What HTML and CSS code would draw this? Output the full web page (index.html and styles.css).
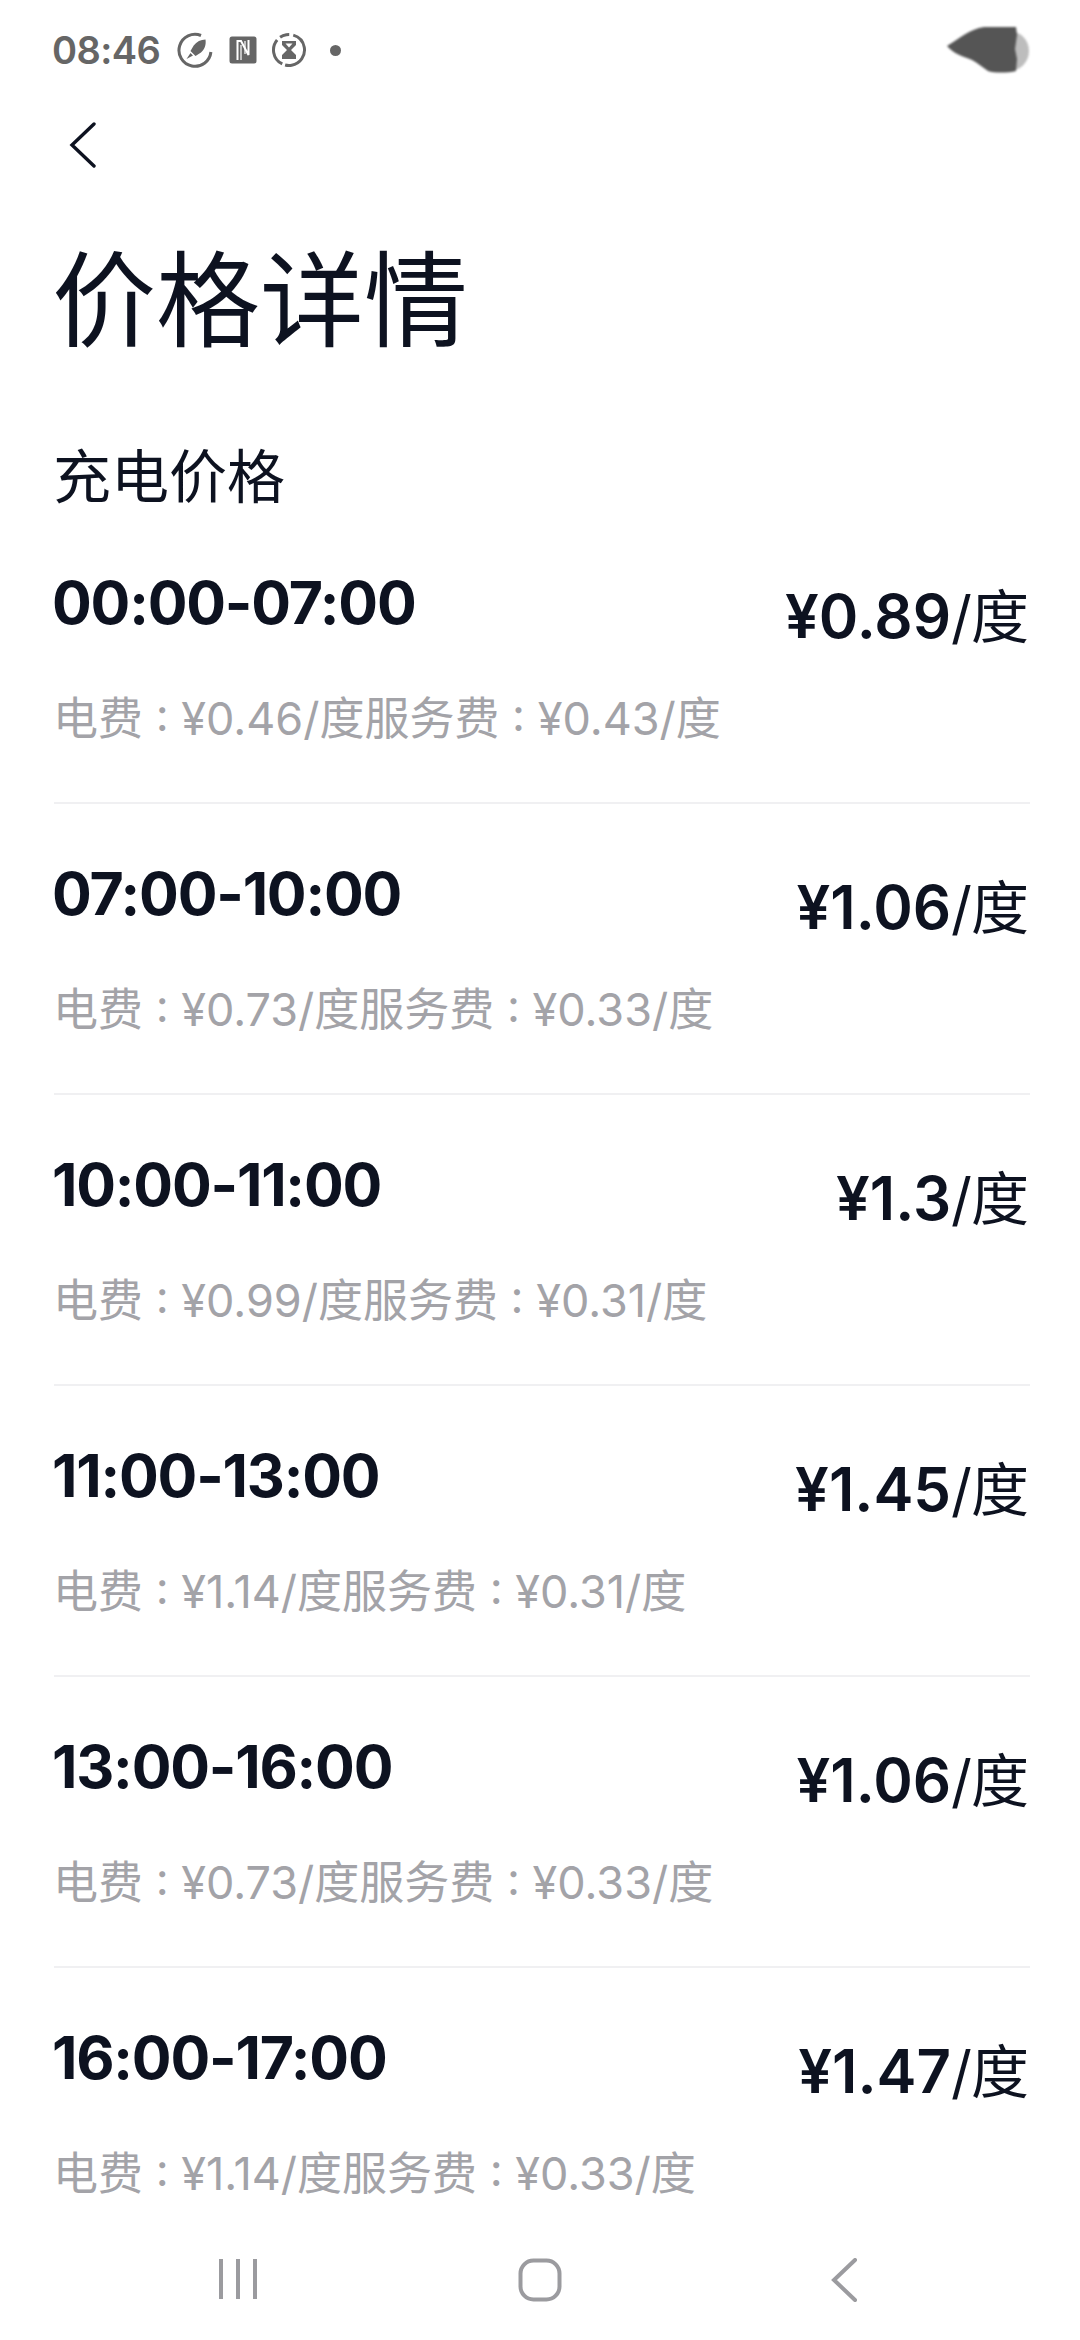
FILE: index.html
```html
<!DOCTYPE html>
<html lang="zh">
<head>
<meta charset="utf-8">
<title>价格详情</title>
<link rel="stylesheet" href="styles.css">
</head>
<body>
<div class="page">
  <div class="status">
    <div class="status-left">
      <span class="clock">08:46</span>
      <svg class="si" width="36" height="36" viewBox="0 0 36 36"><path d="M24 3.5A16 16 0 1 0 33.9 20" fill="none" stroke="#666" stroke-width="3"/><path d="M28.5 7.5c.8 5.5-1 10-4.500 13l-5.500 3.500-5-5 3.200-5.500c3-3.800 7-6 11.800-6zM13.500 21l2.500 2.500-6.500 3.500z" fill="#666"/></svg>
      <svg class="si" width="28" height="28" viewBox="0 0 28 28"><rect x="0.5" y="0.5" width="27" height="27" rx="2.5" fill="#666"/><path d="M8.500 24V5h3.500l7.500 14V4" fill="none" stroke="#fff" stroke-width="2"/><path d="M12 9v15M16 5v13" fill="none" stroke="#fff" stroke-width="1.200"/></svg>
      <svg class="si si-glass" width="36" height="36" viewBox="0 0 36 36"><circle cx="18" cy="18" r="15.500" fill="none" stroke="#666" stroke-width="3" stroke-dasharray="3 4 48 3 28 4 11 0" transform="rotate(-100 18 18)"/><path d="M11 9h14v4l-5 5 5 5v4H11v-4l5-5-5-5z" fill="#666"/><path d="M14.500 11.500h7l-3.500 4z" fill="#fff"/></svg>
      <span class="dot"></span>
    </div>
    <svg class="blob" width="84" height="48" viewBox="0 0 84 48"><circle cx="63" cy="25" r="20" fill="#bdbdbd"/><path d="M1 20C14 12 24 3 38 1h32l1 8-2 14 2 10-1 12c-8 2-22 2-28 0-6-4-10-8-16-11C16 30 8 28 1 20z" fill="#555"/></svg>
  </div>
  <div class="nav-top">
    <svg width="27" height="46" viewBox="0 0 27 46"><path d="M25 2 3 23l22 21" fill="none" stroke="#0d1220" stroke-width="3.400" stroke-linecap="round"/></svg>
  </div>
  <h1 class="title">价格详情</h1>
  <h2 class="section">充电价格</h2>
  <div class="list">
    <div class="row">
      <div class="info"><div class="time">00:00-07:00</div><div class="sub">电费 : ¥0.46/度服务费 : ¥0.43/度</div></div>
      <div class="price"><b>¥0.89</b>/度</div>
    </div>
    <div class="row">
      <div class="info"><div class="time">07:00-10:00</div><div class="sub">电费 : ¥0.73/度服务费 : ¥0.33/度</div></div>
      <div class="price"><b>¥1.06</b>/度</div>
    </div>
    <div class="row">
      <div class="info"><div class="time">10:00-11:00</div><div class="sub">电费 : ¥0.99/度服务费 : ¥0.31/度</div></div>
      <div class="price"><b>¥1.3</b>/度</div>
    </div>
    <div class="row">
      <div class="info"><div class="time">11:00-13:00</div><div class="sub">电费 : ¥1.14/度服务费 : ¥0.31/度</div></div>
      <div class="price"><b>¥1.45</b>/度</div>
    </div>
    <div class="row">
      <div class="info"><div class="time">13:00-16:00</div><div class="sub">电费 : ¥0.73/度服务费 : ¥0.33/度</div></div>
      <div class="price"><b>¥1.06</b>/度</div>
    </div>
    <div class="row">
      <div class="info"><div class="time">16:00-17:00</div><div class="sub">电费 : ¥1.14/度服务费 : ¥0.33/度</div></div>
      <div class="price"><b>¥1.47</b>/度</div>
    </div>
  </div>
  <div class="navbar">
    <svg width="40" height="42" viewBox="0 0 40 42"><path d="M3 1v40M20 1v40M37 1v40" stroke="#9b9b9f" stroke-width="4"/></svg>
    <svg class="nav-home" width="44" height="44" viewBox="0 0 44 44"><rect x="2.500" y="2.500" width="39" height="39" rx="13" fill="none" stroke="#9b9b9f" stroke-width="4"/></svg>
    <svg class="nav-back" width="28" height="44" viewBox="0 0 28 44"><path d="M25 2 4 22l21 20" fill="none" stroke="#9b9b9f" stroke-width="4" stroke-linecap="round"/></svg>
  </div>
</div>
</body>
</html>
```
FILE: styles.css
```css
* { box-sizing: border-box; margin: 0; padding: 0; }
html, body { width: 1080px; height: 2340px; background: #fff; overflow: hidden; }
body { font-family: Inter, "Noto Sans CJK SC", sans-serif; color: #0d1220; }
.page { width: 1080px; height: 2340px; display: flex; flex-direction: column; overflow: hidden; }
.status { height: 100px; padding: 0 50px 0 52px; display: flex; justify-content: space-between; align-items: center; }
.status-left { display: flex; align-items: center; }
.clock { font-size: 38px; font-weight: 600; color: #666; width: 125px; line-height: 48px; letter-spacing: -0.6px; }
.si { margin-right: 16px; flex: none; }
.si-glass { margin-left: -2px; margin-right: 15px; }
.dot { width: 11px; height: 11px; border-radius: 50%; background: #666; margin-left: 8px; }
.blob { filter: blur(0.8px); }
.nav-top { height: 90px; padding: 0 0 0 69px; display: flex; align-items: center; }
.title { font-family: "Noto Sans CJK SC", sans-serif; font-weight: 400; font-size: 104px; line-height: 120px; height: 120px; margin: 44px 0 0 52px; }
.section { font-family: "Noto Sans CJK SC", sans-serif; font-weight: 400; font-size: 58px; line-height: 60px; margin: 89px 0 10px 53px; }
.list { flex: 1; min-height: 0; overflow: hidden; padding: 0 50px 0 54px; }
.row { height: 291px; padding-top: 55px; display: flex; justify-content: space-between; align-items: flex-start; border-bottom: 2px solid #f0f0f2; }
.time { font-size: 59px; font-weight: 700; line-height: 70px; letter-spacing: -1.2px; margin-left: -2px; }
.sub { font-size: 45px; line-height: 60px; margin: 51px 0 0 -1px; color: #a3a3a8; }
.price { font-size: 58px; line-height: 70px; margin: 13px 2px 0 0; letter-spacing: -1px; }
.price b { font-size: 60px; font-weight: 600; letter-spacing: 0; }
.navbar { height: 130px; padding: 48px 0 0 218px; display: flex; align-items: flex-start; }
.nav-home { margin-left: 260px; }
.nav-back { margin-left: 268px; }
```
